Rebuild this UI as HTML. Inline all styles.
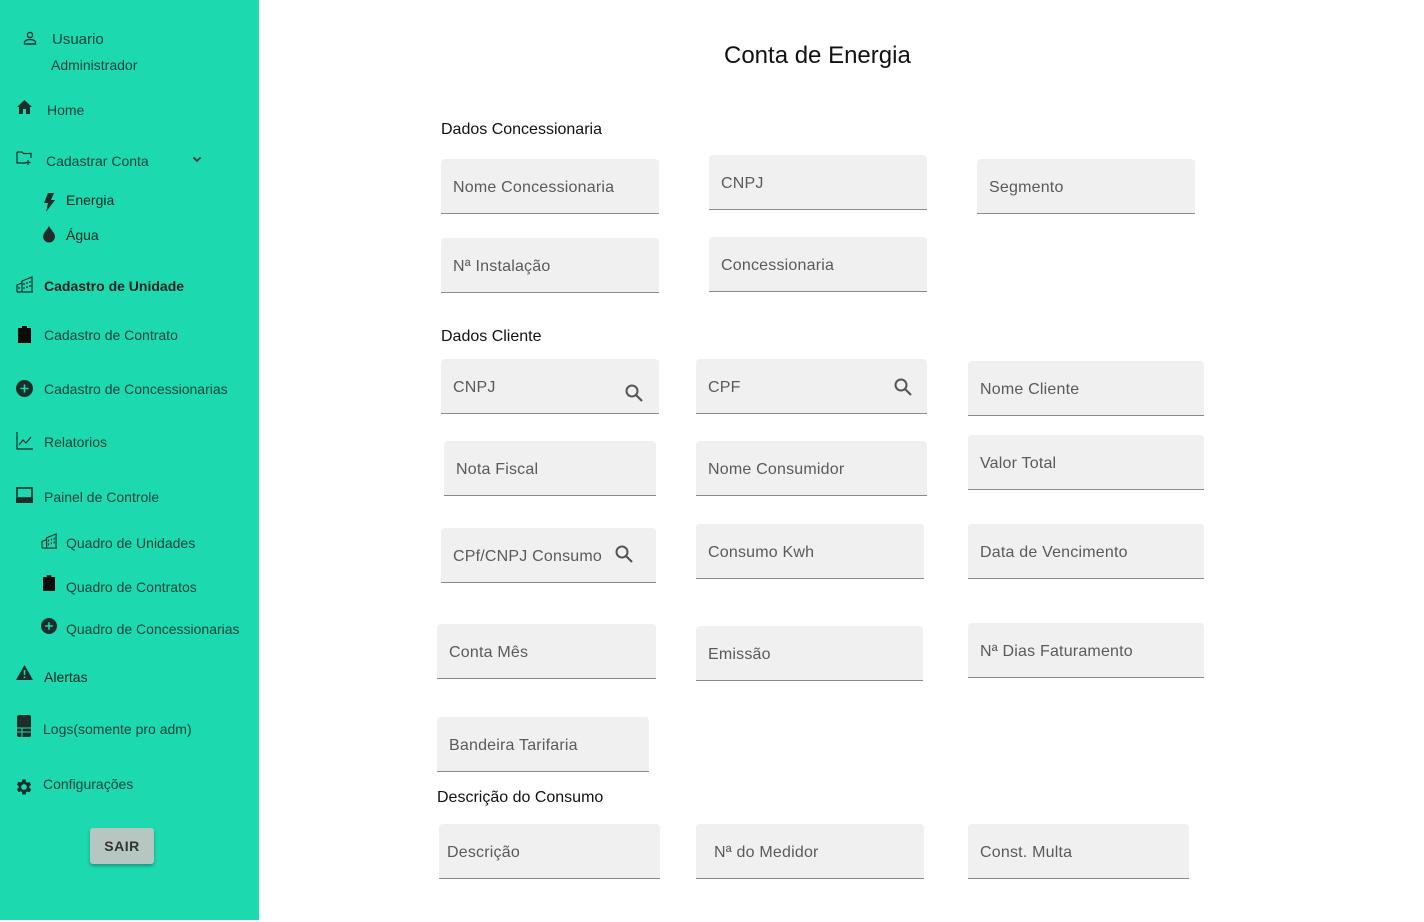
<!DOCTYPE html>
<html><head><meta charset="utf-8"><style>
*{margin:0;padding:0;box-sizing:border-box}
body{width:1424px;height:922px;background:#fff;font-family:"Liberation Sans",sans-serif;position:relative;overflow:hidden}
.sb{position:absolute;left:0;top:0;width:259px;height:920px;background:#1dd9b0}
.t{position:absolute;font-size:14px;color:#17443a;line-height:18px;white-space:nowrap}
.ic{position:absolute}
.f{position:absolute;height:55px;background:#f0f0f0;border-bottom:1px solid #8a8a8a;border-radius:4px 4px 0 0}
.f span{position:absolute;left:12px;top:19px !important;font-size:16px;color:#5a5a5a;line-height:20px;white-space:nowrap;letter-spacing:.2px}
.h{position:absolute;font-size:16px;color:#111;line-height:20px}
.s{position:absolute}
</style></head><body>
<div class="sb">
<svg class="ic" style="left:23px;top:31px" width="14" height="14" viewBox="0 0 14 14"><circle cx="7" cy="4" r="2.6" fill="none" stroke="#1d3b35" stroke-width="1.4"/><path d="M1.5 13v-1.5c0-2 3-3 5.5-3s5.5 1 5.5 3V13z" fill="none" stroke="#1d3b35" stroke-width="1.4"/></svg>
<div class="t" style="left:52px;top:31px;font-size:15px">Usuario</div>
<div class="t" style="left:51px;top:56px">Administrador</div>
<svg class="ic" style="left:17px;top:100px" width="15" height="14" viewBox="0 0 15 14"><path d="M7.5 0L0 7h2v7h4V9h3v5h4V7h2z" fill="#1d2e2a"/></svg>
<div class="t" style="left:47px;top:101px">Home</div>
<svg class="ic" style="left:16px;top:150px" width="17" height="15" viewBox="0 0 17 15"><path d="M1 2h5l1.5 1.5H15V8M1 2v11h9" fill="none" stroke="#1d2e2a" stroke-width="1.2"/><path d="M12 10v5M9.5 12.5h5" stroke="#1d2e2a" stroke-width="1.2"/></svg>
<div class="t" style="left:46px;top:152px">Cadastrar Conta</div>
<svg class="ic" style="left:192px;top:156px" width="10" height="7" viewBox="0 0 10 7"><path d="M1.5 1.5L5 5l3.5-3.5" fill="none" stroke="#1d2e2a" stroke-width="1.6"/></svg>
<svg class="ic" style="left:43px;top:193px" width="12" height="19" viewBox="0 0 12 19"><path d="M5 0h6L8 7h4L3 19l2-9H1z" fill="#1d2e2a"/></svg>
<div class="t" style="left:66px;top:191px;color:#102a24">Energia</div>
<svg class="ic" style="left:42px;top:226px" width="14" height="17" viewBox="0 0 14 17"><path d="M7 0C5 4 1 7 1 10.5A6 6 0 0 0 13 10.5C13 7 9 4 7 0z" fill="#1d2e2a"/></svg>
<div class="t" style="left:66px;top:226px;color:#102a24">Água</div>
<svg class="ic" style="left:16px;top:276px" width="17" height="17" viewBox="0 0 17 17"><path d="M1 16V9l5-2v9M6 16V5l10-4v15M1 16h16M8 7v2M11 6v2M14 5v2M8 11v2M11 10v2M14 9v2M3 11v2" fill="none" stroke="#1d2e2a" stroke-width="1.2"/></svg>
<div class="t" style="left:44px;top:277px;font-weight:bold;color:#0f241f">Cadastro de Unidade</div>
<svg class="ic" style="left:18px;top:326px" width="13" height="17" viewBox="0 0 13 17"><path d="M0 2h4V0h5v2h4v15H0z" fill="#0b0b0b"/></svg>
<div class="t" style="left:44px;top:326px">Cadastro de Contrato</div>
<svg class="ic" style="left:16px;top:380px" width="17" height="17" viewBox="0 0 17 17"><circle cx="8.5" cy="8.5" r="8.5" fill="#1d2e2a"/><path d="M8.5 4.5v8M4.5 8.5h8" stroke="#1dd9b0" stroke-width="1.6"/></svg>
<div class="t" style="left:44px;top:380px">Cadastro de Concessionarias</div>
<svg class="ic" style="left:16px;top:432px" width="17" height="18" viewBox="0 0 17 18"><path d="M1 0v17h16" fill="none" stroke="#1d2e2a" stroke-width="1.2"/><path d="M3 13l4-5 3 3 5-6" fill="none" stroke="#1d2e2a" stroke-width="1.2"/></svg>
<div class="t" style="left:44px;top:433px">Relatorios</div>
<svg class="ic" style="left:16px;top:487px" width="17" height="16" viewBox="0 0 17 16"><rect x="1" y="1" width="15" height="10" fill="none" stroke="#1d2e2a" stroke-width="1.6"/><rect x="0" y="11" width="17" height="5" fill="#1d2e2a"/></svg>
<div class="t" style="left:44px;top:488px">Painel de Controle</div>
<svg class="ic" style="left:41px;top:533px" width="16" height="16" viewBox="0 0 17 17"><path d="M1 16V9l5-2v9M6 16V5l10-4v15M1 16h16M8 7v2M11 6v2M14 5v2M8 11v2M11 10v2M14 9v2" fill="none" stroke="#1d2e2a" stroke-width="1.2"/></svg>
<div class="t" style="left:66px;top:534px">Quadro de Unidades</div>
<svg class="ic" style="left:43px;top:575px" width="12" height="16" viewBox="0 0 13 17"><path d="M0 2h4V0h5v2h4v15H0z" fill="#0b0b0b"/></svg>
<div class="t" style="left:66px;top:578px">Quadro de Contratos</div>
<svg class="ic" style="left:41px;top:618px" width="16" height="16" viewBox="0 0 17 17"><circle cx="8.5" cy="8.5" r="8.5" fill="#1d2e2a"/><path d="M8.5 4.5v8M4.5 8.5h8" stroke="#1dd9b0" stroke-width="1.6"/></svg>
<div class="t" style="left:66px;top:620px">Quadro de Concessionarias</div>
<svg class="ic" style="left:16px;top:665px" width="17" height="15" viewBox="0 0 17 15"><path d="M8.5 0L17 15H0z" fill="#1d2e2a"/><path d="M8.5 5v5M8.5 11.5v1.5" stroke="#1dd9b0" stroke-width="1.5"/></svg>
<div class="t" style="left:44px;top:668px;color:#102a24">Alertas</div>
<svg class="ic" style="left:17px;top:715px" width="14" height="22" viewBox="0 0 14 22"><rect x="0" y="0" width="14" height="22" rx="2" fill="#1d2e2a"/><path d="M0 13h14M0 17h14M5 13v9" stroke="#1dd9b0" stroke-width="1"/></svg>
<div class="t" style="left:43px;top:720px">Logs(somente pro adm)</div>
<svg class="ic" style="left:14px;top:777px" width="20" height="20" viewBox="0 0 24 24"><path fill="#1d2e2a" d="M19.4 13a7.5 7.5 0 0 0 0-2l2.1-1.6-2-3.5-2.5 1a7 7 0 0 0-1.7-1L15 3h-4l-.4 2.6a7 7 0 0 0-1.7 1l-2.5-1-2 3.5L6.6 11a7.5 7.5 0 0 0 0 2l-2.1 1.6 2 3.5 2.5-1a7 7 0 0 0 1.7 1L11 21h4l.4-2.6a7 7 0 0 0 1.7-1l2.5 1 2-3.5zM13 15.5a3.5 3.5 0 1 1 0-7 3.5 3.5 0 0 1 0 7z" transform="translate(-1 0)"/></svg>
<div class="t" style="left:43px;top:775px">Configurações</div>
<div style="position:absolute;left:90px;top:828px;width:64px;height:36px;background:#b6c7c2;border-radius:3px;box-shadow:0 2px 3px rgba(0,0,0,.3);font-size:14px;font-weight:bold;color:#333;text-align:center;line-height:36px;letter-spacing:.5px">SAIR</div>
</div>

<div class="h" style="left:724px;top:41px;font-size:24px;line-height:30px;color:#111">Conta de Energia</div>
<div class="h" style="left:441px;top:120px">Dados Concessionaria</div>
<div class="h" style="left:441px;top:327px">Dados Cliente</div>
<div class="h" style="left:437px;top:788px">Descrição do Consumo</div>

<div class="f" style="left:441px;top:159px;width:218px"><span>Nome Concessionaria</span></div>
<div class="f" style="left:709px;top:155px;width:218px"><span>CNPJ</span></div>
<div class="f" style="left:977px;top:159px;width:218px"><span>Segmento</span></div>
<div class="f" style="left:441px;top:238px;width:218px"><span>Nª Instalação</span></div>
<div class="f" style="left:709px;top:237px;width:218px"><span>Concessionaria</span></div>

<div class="f" style="left:441px;top:359px;width:218px"><span>CNPJ</span></div>
<div class="f" style="left:696px;top:359px;width:231px"><span>CPF</span></div>
<div class="f" style="left:968px;top:361px;width:236px"><span>Nome Cliente</span></div>
<div class="f" style="left:444px;top:441px;width:212px"><span>Nota Fiscal</span></div>
<div class="f" style="left:696px;top:441px;width:231px"><span>Nome Consumidor</span></div>
<div class="f" style="left:968px;top:435px;width:236px"><span>Valor Total</span></div>
<div class="f" style="left:441px;top:528px;width:215px"><span>CPf/CNPJ Consumo</span></div>
<div class="f" style="left:696px;top:524px;width:228px"><span>Consumo Kwh</span></div>
<div class="f" style="left:968px;top:524px;width:236px"><span>Data de Vencimento</span></div>
<div class="f" style="left:437px;top:624px;width:219px"><span>Conta Mês</span></div>
<div class="f" style="left:696px;top:626px;width:227px"><span>Emissão</span></div>
<div class="f" style="left:968px;top:623px;width:236px"><span>Nª Dias Faturamento</span></div>
<div class="f" style="left:437px;top:717px;width:212px"><span>Bandeira Tarifaria</span></div>
<div class="f" style="left:439px;top:824px;width:221px"><span style="left:8px">Descrição</span></div>
<div class="f" style="left:696px;top:824px;width:228px"><span style="left:18px">Nª do Medidor</span></div>
<div class="f" style="left:968px;top:824px;width:221px"><span>Const. Multa</span></div>

<svg class="s" style="left:624px;top:383px" width="20" height="20" viewBox="0 0 20 20"><circle cx="8" cy="8" r="5.5" fill="none" stroke="#555" stroke-width="2"/><path d="M12 12l6 6" stroke="#555" stroke-width="2.2"/></svg>
<svg class="s" style="left:893px;top:377px" width="20" height="20" viewBox="0 0 20 20"><circle cx="8" cy="8" r="5.5" fill="none" stroke="#555" stroke-width="2"/><path d="M12 12l6 6" stroke="#555" stroke-width="2.2"/></svg>
<svg class="s" style="left:614px;top:544px" width="20" height="20" viewBox="0 0 20 20"><circle cx="8" cy="8" r="5.5" fill="none" stroke="#555" stroke-width="2"/><path d="M12 12l6 6" stroke="#555" stroke-width="2.2"/></svg>
</body></html>
